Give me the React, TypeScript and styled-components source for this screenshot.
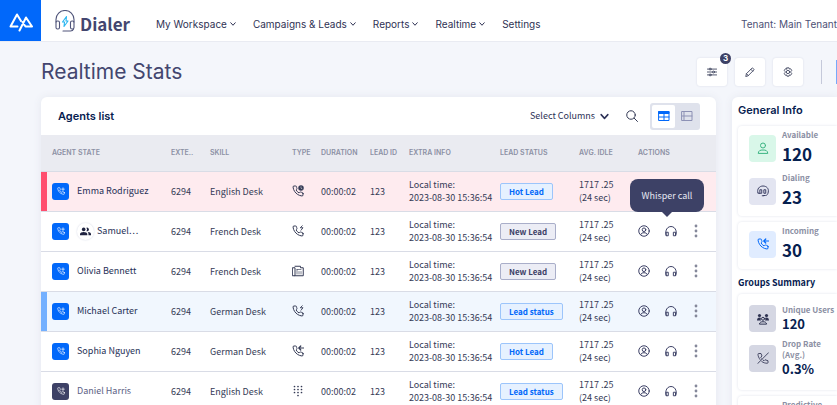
import React from "react";
import styled, { createGlobalStyle, css } from "styled-components";

const heading = `Inter, "Liberation Sans", sans-serif`;
const body = `"Noto Sans CJK JP", "Noto Sans", sans-serif`;

const color = {
  blue: "#0168fa",
  navy: "#06204f",
  ink: "#3d4166",
  text: "#343a55",
  muted: "#8c90a4",
  line: "#d9dce6",
};

const GlobalStyle = createGlobalStyle`
  *, *::before, *::after { box-sizing: border-box; }
  body { margin: 0; background: #f4f6fb; color: ${color.text}; font-family: ${body}; font-size: 9px; overflow: hidden; }
  button, select { font: inherit; color: inherit; border: 0; background: none; padding: 0; margin: 0; cursor: pointer; }
  a { color: inherit; text-decoration: none; }
  h1, h2, h3, p, ul, dl, dd { margin: 0; padding: 0; font-weight: inherit; font-size: inherit; }
  svg { display: block; flex: none; }
`;

/* ---------- Icons ---------- */

const Svg = styled.svg<{ $size: number }>`
  width: ${(p) => p.$size}px;
  height: ${(p) => p.$size}px;
  fill: none;
  stroke: currentColor;
  stroke-width: 2;
  stroke-linecap: round;
  stroke-linejoin: round;
`;

type IconProps = { size?: number };
type Mark = "clock" | "bolt" | "in" | "plus";

const phonePath =
  "M22 16.92v3a2 2 0 0 1-2.18 2 19.79 19.79 0 0 1-8.63-3.07 19.5 19.5 0 0 1-6-6 19.79 19.79 0 0 1-3.07-8.67A2 2 0 0 1 4.11 2h3a2 2 0 0 1 2 1.72 12.84 12.84 0 0 0 .7 2.81 2 2 0 0 1-.45 2.11L8.09 9.91a16 16 0 0 0 6 6l1.27-1.27a2 2 0 0 1 2.11-.45 12.84 12.84 0 0 0 2.81.7A2 2 0 0 1 22 16.92z";

const PhoneIcon = ({ size = 12, mark }: IconProps & { mark: Mark }) => (
  <Svg $size={size} viewBox="0 0 24 24" aria-hidden>
    <path d={phonePath} />
    {mark === "clock" && (
      <>
        <circle cx="18" cy="6" r="5.500" fill="currentColor" stroke="none" />
        <path d="M18 3.500v3l2 1" stroke="#fff" strokeWidth="1" />
      </>
    )}
    {mark === "bolt" && <path d="M20.500 1.500l-4 4h5.500l-4 5" strokeWidth="1.800" />}
    {mark === "in" && <path d="M23 6h-9M17.500 2l-4 4 4 4" strokeWidth="2.400" />}
    {mark === "plus" && <path d="M14 6.500h8M18 2.500v8" />}
  </Svg>
);

const FaxIcon = ({ size = 12 }: IconProps) => (
  <Svg $size={size} viewBox="0 0 24 24" aria-hidden>
    <path d="M1.500 5.500h4.500v16H1.500zM6 2.500h11v3h5.500v16H6" />
    <path d="M10 9h8M10 9v9M14 13v5M18 13v5" strokeWidth="1.300" />
  </Svg>
);

const KeypadIcon = ({ size = 12 }: IconProps) => (
  <Svg $size={size} viewBox="0 0 24 24" aria-hidden>
    <g fill="currentColor" stroke="none">
      {[3, 9, 15].map((y) => [5, 12, 19].map((x) => <circle key={`${x}-${y}`} cx={x} cy={y} r="1.700" />))}
      <circle cx="12" cy="21" r="1.700" />
    </g>
  </Svg>
);

const AccountIcon = ({ size = 12 }: IconProps) => (
  <Svg $size={size} viewBox="0 0 24 24" aria-hidden>
    <circle cx="12" cy="12" r="10.500" />
    <circle cx="12" cy="9.500" r="3.600" />
    <path d="M5.500 19c1-3 3.500-3.500 6.500-3.500s5.500.5 6.500 3.500" />
  </Svg>
);

const HeadphonesIcon = ({ size = 12 }: IconProps) => (
  <Svg $size={size} viewBox="0 0 24 24" aria-hidden>
    <path d="M2.500 21c-1.500-3-1.200-7-.5-9.500C3.200 6.500 7 3 12 3s8.800 3.500 10 8.500c.7 2.500 1 6.500-.5 9.500" />
    <path d="M3 14.500h3.500v7H3zM17.500 14.500H21v7h-3.500z" />
  </Svg>
);

const HeadsetIcon = ({ size = 12 }: IconProps) => (
  <Svg $size={size} viewBox="0 0 24 24" aria-hidden>
    <path d="M2 16C-1 8 5 2 12 2s12 5 10.500 12c-.5 4-2.500 7-5.500 7h-4" />
    <path d="M2 16l3 1M6.500 9.500h3v7h-3zM14.500 9.500h3v7h-3zM10.500 21.500h3" />
  </Svg>
);

const UserIcon = ({ size = 12 }: IconProps) => (
  <Svg $size={size} viewBox="0 0 24 24" aria-hidden>
    <circle cx="12" cy="7" r="5" />
    <path d="M2.500 22c.5-5 4-6 9.500-6s9 1 9.500 6z" />
  </Svg>
);

const PeopleIcon = ({ size = 12 }: IconProps) => (
  <Svg $size={size} viewBox="0 0 24 24" aria-hidden>
    <g fill="currentColor" stroke="none">
      <circle cx="8" cy="7.500" r="4" />
      <path d="M0 20v-2.500C0 14.500 4 13 8 13s8 1.500 8 4.500V20z" />
      <path d="M14 3.800a4 4 0 1 1 0 7.400 6 6 0 0 0 0-7.400zM17 13.300c4 .4 7 1.800 7 4.200V20h-5.500v-2.500c0-1.700-.5-3-1.500-4.200z" />
    </g>
  </Svg>
);

const GroupIcon = ({ size = 12 }: IconProps) => (
  <Svg $size={size} viewBox="0 0 24 24" aria-hidden>
    <g fill="currentColor" stroke="none">
      <circle cx="5" cy="5" r="3.200" />
      <circle cx="19" cy="5" r="3.200" />
      <path d="M0 15c0-4 2-6 5-6 1.500 0 2.500.5 3 1-1 2-1 3.500 0 5zM24 15c0-4-2-6-5-6-1.500 0-2.500.5-3 1 1 2 1 3.500 0 5z" />
    </g>
    <circle cx="12" cy="11.500" r="3" />
    <path d="M5 21.500c.5-3 3-4 7-4s6.500 1 7 4z" />
  </Svg>
);

const DropRateIcon = ({ size = 12 }: IconProps) => (
  <Svg $size={size} viewBox="0 0 24 24" aria-hidden>
    <g strokeWidth="1.700">
      <path d="M23 1.500L1.500 23" />
      <path d="M6 15c-2.500-3.500-4-7-4-10.500C2 3.500 2.500 3 3.500 3H8l2 5-2.500 2.500 1 2M12 16l2 1.500 2-2 6 2V21c0 1-.5 1.500-1.500 1.500-4 0-7.500-1-11-3.500" />
    </g>
  </Svg>
);

const ChevronIcon = ({ size = 6 }: IconProps) => (
  <Svg $size={size} viewBox="0 0 12 12" aria-hidden>
    <path d="M1.500 3.500L6 8.500l4.500-5" />
  </Svg>
);

const SearchIcon = ({ size = 12 }: IconProps) => (
  <Svg $size={size} viewBox="0 0 24 24" aria-hidden>
    <circle cx="10" cy="10" r="8.500" />
    <path d="M16.500 16.500L23 23" />
  </Svg>
);

const SlidersIcon = ({ size = 10 }: IconProps) => (
  <Svg $size={size} viewBox="0 0 24 24" aria-hidden>
    <path d="M1 5h4M10 5h13M1 12h12M18 12h5M1 19h4M10 19h13" />
    <circle cx="7.500" cy="5" r="2.300" />
    <circle cx="15.500" cy="12" r="2.300" />
    <circle cx="7.500" cy="19" r="2.300" />
  </Svg>
);

const PencilIcon = ({ size = 10 }: IconProps) => (
  <Svg $size={size} viewBox="0 0 24 24" aria-hidden>
    <path d="M2 22l1.500-6L17 2.500c1.200-1.200 5.700 3.300 4.500 4.500L8 20.500zM14 5.500l4.500 4.500M3.500 16L8 20.500" />
  </Svg>
);

const GearIcon = ({ size = 10 }: IconProps) => (
  <Svg $size={size} viewBox="0 0 24 24" aria-hidden>
    <path d="M9.500 2h5l.8 3 3-.8 2.700 4-2 2.300v3l2 2.300-2.700 4-3-.8-.8 3h-5l-.8-3-3 .8-2.700-4 2-2.300v-3L3 8.200l2.700-4 3 .8z" />
    <circle cx="12" cy="12" r="4" />
  </Svg>
);

const TableIcon = ({ size = 12 }: IconProps) => (
  <Svg $size={size} viewBox="0 0 24 24" aria-hidden>
    <path d="M2 3h20v18H2zM2 14h20M12 7v14" />
    <path d="M2 3h20v4H2z" fill="currentColor" />
  </Svg>
);

const ListIcon = ({ size = 12 }: IconProps) => (
  <Svg $size={size} viewBox="0 0 24 24" aria-hidden>
    <path d="M2 3h20v18H2zM2 12h20M6 3v18" />
  </Svg>
);

const KebabIcon = () => (
  <svg width="4" height="14" viewBox="0 0 4 14" fill="#85889a" aria-hidden>
    <circle cx="2" cy="2" r="1.400" />
    <circle cx="2" cy="7" r="1.400" />
    <circle cx="2" cy="12" r="1.400" />
  </svg>
);

const BrandMark = () => (
  <svg width="24" height="19" viewBox="0 0 24 19" fill="none" stroke="#fff" strokeWidth="2" strokeLinejoin="round" strokeLinecap="round" aria-hidden>
    <path d="M8.500 13.500H1.500L8 1.500l4 6.500" />
    <path d="M10.500 17.500L17 4.500l6 9h-6.500L13.500 9" />
  </svg>
);

const DialerMark = () => (
  <svg width="20" height="22" viewBox="0 0 20 22" fill="none" stroke="#50557a" strokeWidth="1.100" strokeLinecap="round" strokeLinejoin="round" aria-hidden>
    <path d="M1 12V9.500a9 9 0 0 1 18 0V12" />
    <rect x="1" y="11" width="3.500" height="8" rx="1.500" />
    <rect x="15.500" y="11" width="3.500" height="8" rx="1.500" />
    <path d="M18.500 19c-.5 1.500-1.500 2-3 2H8" />
    <path d="M11.500 6.500L7.500 12h2L9 16.500l4-5.500h-2z" stroke="#29b6f0" />
  </svg>
);

/* ---------- Top bar ---------- */

const TopBar = styled.header`
  display: flex;
  align-items: center;
  height: 42px;
  background: #fff;
  border-bottom: 1px solid #e9ebf2;
  font: 10px/16px ${heading};
  color: #2f3254;
  white-space: nowrap;
`;

const Brand = styled.a`
  display: grid;
  place-items: center;
  width: 41px;
  height: 41px;
  padding-top: 4px;
  background: ${color.blue};
`;

const Product = styled.a`
  display: flex;
  align-items: center;
  gap: 5px;
  width: 115px;
  padding-left: 14px;
  color: #43466f;
  font: bold 17px/24px ${body};
  span { padding-top: 6px; }
`;

const Nav = styled.nav`
  display: flex;
  flex: 1;
  gap: 17px;
  padding-top: 6px;
`;

const NavItem = styled.button`
  display: flex;
  align-items: center;
  gap: 3px;
`;

const Tenant = styled.div`
  padding-top: 6px;
  color: #4d5175;
`;

/* ---------- Page head ---------- */

const PageHead = styled.div`
  display: flex;
  align-items: center;
  gap: 8px;
  height: 55px;
  padding: 5px 0 0 41px;
`;

const Title = styled.h1`
  flex: 1;
  font: 21px/28px ${heading};
  color: #43466f;
`;

const ToolButton = styled.button`
  position: relative;
  display: grid;
  place-items: center;
  width: 30px;
  height: 28px;
  border-radius: 3px;
  background: #fff;
  box-shadow: 0 0 2px #d5d8e4;
`;

const Count = styled.span`
  position: absolute;
  top: -5px;
  right: -4px;
  width: 11px;
  height: 11px;
  border-radius: 50%;
  background: ${color.ink};
  color: #fff;
  font: bold 8px/11px ${heading};
`;

const Divider = styled.i`
  width: 1px;
  height: 24px;
  margin: 0 6px 0 10px;
  background: #c5c9da;
`;

const PrimaryEdge = styled.button`
  width: 1px;
  height: 24px;
  background: #77a9fb;
`;

/* ---------- Layout ---------- */

const Content = styled.main`
  display: flex;
  gap: 16px;
  padding-left: 41px;
`;

const Card = styled.section`
  flex: 1;
  min-width: 0;
  background: #fff;
  border-radius: 6px;
  box-shadow: 0 0 8px #e4e7ef;
`;

const CardBar = styled.div`
  display: flex;
  align-items: center;
  height: 38px;
  padding: 0 16px 0 17px;
`;

const CardTitle = styled.h2`
  flex: 1;
  font: 600 11px/16px ${heading};
  color: ${color.navy};
`;

const ColumnPicker = styled.label`
  display: flex;
  align-items: center;
  gap: 2px;
  margin-right: 17px;
  color: #2c3156;
  select { appearance: none; width: 68px; font-size: 9px; line-height: 16px; outline: 0; }
`;

const Segments = styled.div`
  display: flex;
  margin-left: 12px;
  padding: 2px;
  border-radius: 3px;
  background: #dfe2ec;
`;

const Segment = styled.button<{ $on?: boolean }>`
  display: grid;
  place-items: center;
  width: 23px;
  height: 23px;
  border-radius: 2px;
  color: ${(p) => (p.$on ? color.blue : "#8d91b5")};
  background: ${(p) => (p.$on ? "#fff" : "transparent")};
`;

/* ---------- Agents table ---------- */

const Table = styled.table`
  width: 100%;
  table-layout: fixed;
  border-collapse: collapse;
  text-align: left;
  white-space: nowrap;
`;

const HeadCell = styled.th`
  height: 36px;
  padding: 0;
  background: #eaebf1;
  border-bottom: 1px solid ${color.line};
  color: ${color.muted};
  font: 600 7px/12px ${heading};
  &:first-child { padding-left: 11px; }
`;

const tones = {
  plain: { bg: "#fff", bar: "transparent" },
  alert: { bg: "#feebef", bar: "#ff4e6e" },
  active: { bg: "#f1f7fe", bar: "#73b0ff" },
};

const Row = styled.tr<{ $tone: keyof typeof tones }>`
  height: 40px;
  background: ${(p) => tones[p.$tone].bg};
  td:first-child { box-shadow: inset 6px 0 ${(p) => tones[p.$tone].bar}; padding-left: 11px; }
`;

const Cell = styled.td`
  padding: 0;
  border-bottom: 1px solid ${color.line};
  line-height: 13px;
  color: ${color.text};
`;

const Agent = styled.div<{ $away?: boolean }>`
  display: flex;
  align-items: center;
  gap: 8px;
  line-height: 16px;
  color: ${(p) => (p.$away ? "#5c6084" : "#263056")};
`;

const StateTile = styled.span<{ $away?: boolean }>`
  display: grid;
  place-items: center;
  width: 17px;
  height: 17px;
  border-radius: 3px;
  color: #fff;
  background: ${(p) => (p.$away ? color.ink : color.blue)};
`;

const TeamDot = styled.span`
  display: grid;
  place-items: center;
  width: 17px;
  height: 17px;
  margin-right: -5px;
  border-radius: 50%;
  background: #fff;
  box-shadow: 0 0 2px #d3d6e4;
  color: #1f2340;
`;

const statusTones = {
  blue: css`color: ${color.blue}; background: #e6f1ff; border-color: #9cc5fb;`,
  grey: css`color: #3d4166; background: #ecedf5; border-color: #a9aec9;`,
};

const Status = styled.span<{ $tone: keyof typeof statusTones }>`
  display: inline-block;
  padding: 0 8px;
  border: 1px solid;
  border-radius: 2px;
  font-size: 8px;
  font-weight: bold;
  line-height: 15px;
  ${(p) => statusTones[p.$tone]}
`;

const Actions = styled.div`
  display: flex;
  align-items: center;
  gap: 15px;
  color: ${color.ink};
`;

const Action = styled.button`
  position: relative;
  display: grid;
  place-items: center;
  min-width: 8px;
`;

const Tooltip = styled.span`
  position: absolute;
  right: -27px;
  bottom: 25px;
  z-index: 1;
  width: 74px;
  border-radius: 8px;
  background: ${color.ink};
  color: #e6e8f3;
  line-height: 33px;
  text-align: center;
  &::after {
    content: "";
    position: absolute;
    top: 100%;
    left: 50%;
    margin-left: -5px;
    border: 5px solid transparent;
    border-top-color: ${color.ink};
    border-bottom: 0;
  }
`;

/* ---------- Summary panel ---------- */

const Panel = styled.aside`
  flex: 0 0 105px;
  min-width: 0;
  padding: 5px 0 0 6px;
  background: #fff;
  border-radius: 6px 0 0 6px;
  box-shadow: 0 0 8px #e4e7ef;
  color: ${color.navy};
`;

const PanelTitle = styled.h2`
  font: 600 11px/16px ${heading};
  margin-bottom: 8px;
`;

const PanelSubtitle = styled.h3`
  font-size: 9px;
  font-weight: bold;
  line-height: 14px;
  margin: 7px 0 4px;
  white-space: nowrap;
`;

const StatCard = styled.dl<{ $roomy?: boolean }>`
  display: grid;
  gap: 5px;
  margin-bottom: 6px;
  padding: ${(p) => (p.$roomy ? "10px 0 12px 11px" : "3px 0 6px 11px")};
  border-radius: 4px 0 0 4px;
  box-shadow: 0 0 3px #dfe2ec;
`;

const Stat = styled.div`
  display: grid;
  grid-template-columns: 27px 1fr;
  column-gap: 6px;
  align-items: center;
`;

const tileTones = {
  green: css`color: #3cb583; background: #d9f7e9;`,
  grey: css`color: #3d4166; background: #e3e5f1;`,
  blue: css`color: ${color.blue}; background: #e0ecff;`,
  slate: css`color: #2f3352; background: #d5d7e3;`,
};

const StatTile = styled.span<{ $tone: keyof typeof tileTones }>`
  display: grid;
  place-items: center;
  height: 27px;
  border-radius: 4px;
  ${(p) => tileTones[p.$tone]}
`;

const StatText = styled.div<{ $small?: boolean }>`
  dt { font-size: 8px; font-weight: bold; line-height: 11px; color: ${color.muted}; }
  dd {
    font-size: ${(p) => (p.$small ? 13 : 17)}px;
    font-weight: bold;
    line-height: ${(p) => (p.$small ? 18 : 27)}px;
  }
`;

/* ---------- Data ---------- */

const navItems = ["My Workspace", "Campaigns & Leads", "Reports", "Realtime"];

const columns: [string, number][] = [
  ["AGENT STATE", 130],
  ["EXTE..", 39],
  ["SKILL", 82],
  ["TYPE", 29],
  ["DURATION", 49],
  ["LEAD ID", 39],
  ["EXTRA INFO", 91],
  ["LEAD STATUS", 79],
  ["AVG. IDLE", 59],
  ["ACTIONS", 78],
];

type AgentRow = {
  name: string;
  skill: string;
  type: React.ReactNode;
  status: string;
  tone?: keyof typeof tones;
  team?: boolean;
  away?: boolean;
  tip?: string;
};

const agents: AgentRow[] = [
  { name: "Emma Rodriguez", skill: "English Desk", type: <PhoneIcon mark="clock" />, status: "Hot Lead", tone: "alert" },
  { name: "Samuel…", skill: "French Desk", type: <PhoneIcon mark="bolt" />, status: "New Lead", team: true, tip: "Whisper call" },
  { name: "Olivia Bennett", skill: "French Desk", type: <FaxIcon />, status: "New Lead" },
  { name: "Michael Carter", skill: "German Desk", type: <PhoneIcon mark="bolt" />, status: "Lead status", tone: "active" },
  { name: "Sophia Nguyen", skill: "German Desk", type: <PhoneIcon mark="in" />, status: "Hot Lead" },
  { name: "Daniel Harris", skill: "English Desk", type: <KeypadIcon />, status: "Lead status", away: true },
];

type StatProps = { label: string; value?: string; tone: keyof typeof tileTones; icon?: React.ReactNode; small?: boolean };

const StatItem = ({ label, value, tone, icon, small }: StatProps) => (
  <Stat>
    {icon ? <StatTile $tone={tone}>{icon}</StatTile> : <span />}
    <StatText $small={small}>
      <dt>{label}</dt>
      {value && <dd>{value}</dd>}
    </StatText>
  </Stat>
);

export default function App() {
  return (
    <>
      <GlobalStyle />
      <TopBar>
        <Brand href="#" aria-label="Home"><BrandMark /></Brand>
        <Product href="#"><DialerMark /><span>Dialer</span></Product>
        <Nav>
          {navItems.map((item) => (
            <NavItem key={item}>{item}<ChevronIcon /></NavItem>
          ))}
          <NavItem as="a" href="#">Settings</NavItem>
        </Nav>
        <Tenant>Tenant: Main Tenant</Tenant>
      </TopBar>

      <PageHead>
        <Title>Realtime Stats</Title>
        <ToolButton aria-label="Filters"><SlidersIcon /><Count>3</Count></ToolButton>
        <ToolButton aria-label="Edit"><PencilIcon /></ToolButton>
        <ToolButton aria-label="Preferences"><GearIcon /></ToolButton>
        <Divider />
        <PrimaryEdge aria-label="More" />
      </PageHead>

      <Content>
        <Card>
          <CardBar>
            <CardTitle>Agents list</CardTitle>
            <ColumnPicker>
              <select aria-label="Select Columns"><option>Select Columns</option></select>
              <ChevronIcon size={9} />
            </ColumnPicker>
            <Action aria-label="Search"><SearchIcon /></Action>
            <Segments>
              <Segment $on aria-label="Table view"><TableIcon /></Segment>
              <Segment aria-label="List view"><ListIcon /></Segment>
            </Segments>
          </CardBar>
          <Table>
            <colgroup>
              {columns.map(([label, width]) => <col key={label} width={width} />)}
            </colgroup>
            <thead>
              <tr>{columns.map(([label]) => <HeadCell key={label} scope="col">{label}</HeadCell>)}</tr>
            </thead>
            <tbody>
              {agents.map((a) => (
                <Row key={a.name} $tone={a.tone ?? "plain"}>
                  <Cell>
                    <Agent $away={a.away}>
                      <StateTile $away={a.away}><PhoneIcon size={8} mark="plus" /></StateTile>
                      {a.team && <TeamDot><PeopleIcon size={11} /></TeamDot>}
                      {a.name}
                    </Agent>
                  </Cell>
                  <Cell>6294</Cell>
                  <Cell>{a.skill}</Cell>
                  <Cell>{a.type}</Cell>
                  <Cell>00:00:02</Cell>
                  <Cell>123</Cell>
                  <Cell>Local time:<br />2023-08-30 15:36:54</Cell>
                  <Cell><Status $tone={a.status === "New Lead" ? "grey" : "blue"}>{a.status}</Status></Cell>
                  <Cell>1717 .25<br />(24 sec)</Cell>
                  <Cell>
                    <Actions>
                      <Action aria-label="Profile"><AccountIcon /></Action>
                      <Action aria-label="Whisper">
                        <HeadphonesIcon />
                        {a.tip && <Tooltip role="tooltip">{a.tip}</Tooltip>}
                      </Action>
                      <Action aria-label="More actions"><KebabIcon /></Action>
                    </Actions>
                  </Cell>
                </Row>
              ))}
            </tbody>
          </Table>
        </Card>

        <Panel>
          <PanelTitle>General Info</PanelTitle>
          <StatCard>
            <StatItem label="Available" value="120" tone="green" icon={<UserIcon />} />
            <StatItem label="Dialing" value="23" tone="grey" icon={<HeadsetIcon />} />
          </StatCard>
          <StatCard>
            <StatItem label="Incoming" value="30" tone="blue" icon={<PhoneIcon mark="in" />} />
          </StatCard>
          <PanelSubtitle>Groups Summary</PanelSubtitle>
          <StatCard $roomy>
            <StatItem small label="Unique Users" value="120" tone="slate" icon={<GroupIcon />} />
            <StatItem small label="Drop Rate (Avg.)" value="0.3%" tone="slate" icon={<DropRateIcon />} />
          </StatCard>
          <StatCard>
            <StatItem small label="Predictive" tone="slate" />
          </StatCard>
        </Panel>
      </Content>
    </>
  );
}
